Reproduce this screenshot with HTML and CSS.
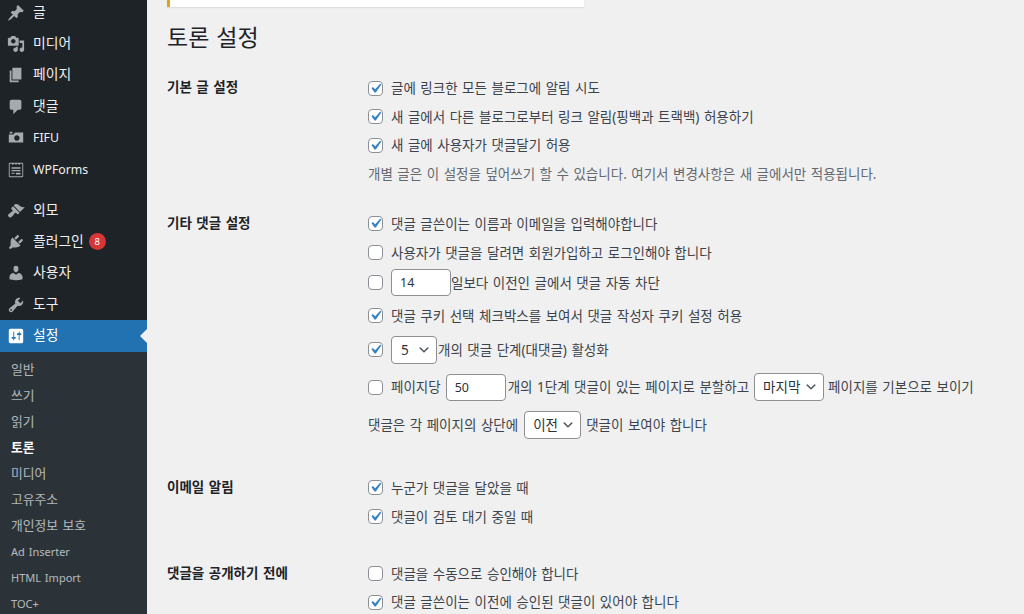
FILE: index.html
```html
<!DOCTYPE html>
<html lang="ko">
<head>
<meta charset="utf-8">
<title>토론 설정</title>
<link rel="stylesheet" href="styles.css">
</head>
<body>
<aside class="sidebar">
  <nav class="menu">
    <a class="item"><svg class="ico" viewBox="0 0 20 20"><path d="M10.44 3.02l1.82-1.82 6.36 6.35-1.83 1.82c-1.05-.68-2.48-.57-3.41.36l-.75.75c-.92.93-1.04 2.35-.35 3.41l-1.83 1.82-2.41-2.41-2.8 2.79c-.42.42-3.38 2.71-3.8 2.29s1.86-3.39 2.28-3.81l2.79-2.79L4.1 9.36l1.83-1.82c1.05.69 2.48.57 3.41-.36l.75-.75c.93-.92 1.04-2.35.35-3.41z"/></svg><span>글</span></a>
    <a class="item"><svg class="ico" viewBox="0 0 20 20"><path d="M13 11V4c0-.55-.45-1-1-1h-1.67L9 1H5L3.67 3H2c-.55 0-1 .45-1 1v7c0 .55.45 1 1 1h10c.55 0 1-.45 1-1zM7 4.5c1.38 0 2.5 1.12 2.5 2.5S8.38 9.5 7 9.5 4.5 8.38 4.5 7 5.62 4.5 7 4.5zM14 6h5v10.5c0 1.38-1.12 2.5-2.5 2.5S14 17.88 14 16.5s1.12-2.5 2.5-2.5c.17 0 .34.02.5.05V9h-3V6zm-4 8.05V13h2v3.5c0 1.38-1.12 2.5-2.5 2.5S7 17.88 7 16.5 8.12 14 9.5 14c.17 0 .34.02.5.05z"/></svg><span>미디어</span></a>
    <a class="item"><svg class="ico" viewBox="0 0 20 20"><path d="M6 15V2h10v13H6zm-1 1h8v2H3V5h2v11z"/></svg><span>페이지</span></a>
    <a class="item"><svg class="ico" viewBox="0 0 20 20"><path d="M5 2h9c1.1 0 2 .9 2 2v7c0 1.1-.9 2-2 2h-2l-5 5v-5H5c-1.1 0-2-.9-2-2V4c0-1.1.9-2 2-2z"/></svg><span>댓글</span></a>
    <a class="item"><svg class="ico" viewBox="0 0 20 20"><path d="M6 5V3H3v2h3zm12 10V4H9L7 6H2v9h16zm-7-8c1.66 0 3 1.34 3 3s-1.34 3-3 3-3-1.34-3-3 1.34-3 3-3z"/></svg><span class="latin">FIFU</span></a>
    <a class="item"><svg class="ico" viewBox="0 0 20 20"><path fill-rule="evenodd" d="M3 2h14a1 1 0 0 1 1 1v14a1 1 0 0 1-1 1H3a1 1 0 0 1-1-1V3a1 1 0 0 1 1-1zm0 1v14h14V3h-2.200l-1.300 1.500L12 3h-.9L10 4.500 8.900 3H8L6.500 4.500 5.200 3H3zm2 4h10v1.500H5V7zm0 3h10v1.500H5V10zm5 3h5v2h-5v-2zm-5 0h3.500v1.200H5V13z"/></svg><span class="latin">WPForms</span></a>
    <div class="sep"></div>
    <a class="item"><svg class="ico" viewBox="0 0 20 20"><path d="M14.480 11.060L7.410 3.990l1.500-1.500c.5-.56 2.300-.47 3.510.32 1.210.8 1.430 1.280 2.910 2.100 1.180.64 2.450 1.260 4.450.85zm-.71.710L6.700 4.700 4.930 6.470c-.39.39-.39 1.020 0 1.410l1.060 1.060c.39.39.39 1.030 0 1.420-.6.6-1.430 1.110-2.210 1.690-.35.26-.7.53-1.010.84C1.430 13.230.91 15.040 1.200 15.600l1.420 1.420c.5.28 2.300-.24 3.650-1.590.3-.3.57-.65.84-1.010.58-.78 1.090-1.610 1.690-2.210.39-.39 1.020-.39 1.410 0l1.060 1.060c.39.39 1.020.39 1.410 0z"/></svg><span>외모</span></a>
    <a class="item"><svg class="ico" viewBox="0 0 20 20"><path d="M13.110 4.360L9.870 7.600 8 5.730l3.240-3.240c.35-.34 1.050-.2 1.560.32.52.51.66 1.210.31 1.550zm-8 1.770l.91-1.120 9.010 9.010-1.190.84c-.71.71-2.630 1.160-3.820 1.160H6.140L4.900 17.260c-.59.59-1.540.59-2.120 0-.59-.58-.59-1.530 0-2.120l1.240-1.240v-3.880c0-1.130.4-3.190 1.090-3.890zm7.260 3.970l3.240-3.240c.34-.35 1.040-.21 1.550.31.52.51.66 1.210.31 1.550l-3.240 3.250z"/></svg><span>플러그인</span><b class="badge">8</b></a>
    <a class="item"><svg class="ico" viewBox="0 0 20 20"><path d="M10 9.250c-2.270 0-2.730-3.440-2.730-3.440C7 4.020 7.820 2 9.970 2c2.160 0 2.980 2.020 2.710 3.810 0 0-.41 3.440-2.680 3.440zm0 2.570L12.720 10c2.390 0 4.520 2.330 4.520 4.530v2.490s-3.650 1.130-7.240 1.130c-3.650 0-7.240-1.130-7.240-1.130v-2.490c0-2.250 1.940-4.480 4.470-4.480z"/></svg><span>사용자</span></a>
    <a class="item"><svg class="ico" viewBox="0 0 20 20"><path d="M16.680 9.770c-1.340 1.340-3.300 1.670-4.950.99l-5.410 6.520c-.99.99-2.590.99-3.580 0s-.99-2.590 0-3.570l6.520-5.420c-.68-1.650-.35-3.610.99-4.950 1.280-1.280 3.120-1.620 4.720-1.060l-2.890 2.890 2.820 2.820 2.860-2.870c.53 1.580.18 3.390-1.080 4.650zM3.810 16.210c.4.39 1.040.39 1.430 0 .4-.4.4-1.040 0-1.430-.39-.4-1.030-.4-1.430 0-.39.39-.39 1.030 0 1.430z"/></svg><span>도구</span></a>
    <a class="item current"><svg class="ico" viewBox="0 0 20 20"><path d="M18 16V4c0-1.100-.9-2-2-2H4c-1.100 0-2 .9-2 2v12c0 1.100.9 2 2 2h12c1.100 0 2-.9 2-2zM8 11h1c.55 0 1 .45 1 1s-.45 1-1 1H8v1.500c0 .28-.22.5-.5.5s-.5-.22-.5-.5V13H6c-.55 0-1-.45-1-1s.45-1 1-1h1V5.500c0-.28.22-.5.5-.5s.5.22.5.5V11zm5-2h-1c-.55 0-1-.45-1-1s.45-1 1-1h1V5.500c0-.28.22-.5.5-.5s.5.22.5.5V7h1c.55 0 1 .45 1 1s-.45 1-1 1h-1v5.500c0 .28-.22.5-.5.5s-.5-.22-.5-.5V9z"/></svg><span>설정</span></a>
    <ul class="submenu">
      <li>일반</li>
      <li>쓰기</li>
      <li>읽기</li>
      <li class="on">토론</li>
      <li>미디어</li>
      <li>고유주소</li>
      <li>개인정보 보호</li>
      <li class="latin">Ad Inserter</li>
      <li class="latin">HTML Import</li>
      <li class="latin">TOC+</li>
    </ul>
  </nav>
</aside>
<main class="content">
  <div class="notice"></div>
  <h1 class="title">토론 설정</h1>
  <section class="group group-first">
    <h2 class="label">기본 글 설정</h2>
    <div class="fields">
      <label class="line"><input type="checkbox" checked>글에 링크한 모든 블로그에 알림 시도</label>
      <label class="line"><input type="checkbox" checked>새 글에서 다른 블로그로부터 링크 알림(핑백과 트랙백) 허용하기</label>
      <label class="line"><input type="checkbox" checked>새 글에 사용자가 댓글달기 허용</label>
      <p class="line desc">개별 글은 이 설정을 덮어쓰기 할 수 있습니다. 여기서 변경사항은 새 글에서만 적용됩니다.</p>
    </div>
  </section>
  <section class="group">
    <h2 class="label">기타 댓글 설정</h2>
    <div class="fields">
      <label class="line"><input type="checkbox" checked>댓글 글쓴이는 이름과 이메일을 입력해야합니다</label>
      <label class="line"><input type="checkbox">사용자가 댓글을 달려면 회원가입하고 로그인해야 합니다</label>
      <label class="line ctl tight"><input type="checkbox"><input class="num w60" type="text" value="14">일보다 이전인 글에서 댓글 자동 차단</label>
      <label class="line after-ctl"><input type="checkbox" checked>댓글 쿠키 선택 체크박스를 보여서 댓글 작성자 쿠키 설정 허용</label>
      <label class="line ctl"><input type="checkbox" checked><select class="sel w46"><option>5</option></select>개의 댓글 단계(대댓글) 활성화</label>
      <label class="line ctl"><input type="checkbox">페이지당<input class="num w60 ml2" type="text" value="50"><span class="ml1">개의 1단계 댓글이 있는 페이지로 분할하고</span><select class="sel w70 ml2"><option>마지막</option></select><span class="ml">페이지를 기본으로 보이기</span></label>
      <label class="line ctl">댓글은 각 페이지의 상단에<select class="sel w57 ml3"><option>이전</option></select><span class="ml2">댓글이 보여야 합니다</span></label>
    </div>
  </section>
  <section class="group">
    <h2 class="label">이메일 알림</h2>
    <div class="fields">
      <label class="line"><input type="checkbox" checked>누군가 댓글을 달았을 때</label>
      <label class="line"><input type="checkbox" checked>댓글이 검토 대기 중일 때</label>
    </div>
  </section>
  <section class="group">
    <h2 class="label">댓글을 공개하기 전에</h2>
    <div class="fields">
      <label class="line"><input type="checkbox">댓글을 수동으로 승인해야 합니다</label>
      <label class="line"><input type="checkbox" checked>댓글 글쓴이는 이전에 승인된 댓글이 있어야 합니다</label>
    </div>
  </section>
</main>
</body>
</html>
```
FILE: styles.css
```css
* { box-sizing: border-box; }
html, body { margin: 0; height: 614px; overflow: hidden; }
body {
  display: flex;
  background: #f0f0f1;
  color: #3c434a;
  font: 13.500px/20px "Noto Sans", "Noto Sans CJK KR", sans-serif;
  word-spacing: 1px;
}
.sidebar { width: 146.500px; flex: none; background: #1d2327; overflow: hidden; }
.menu { margin-top: -3px; }
.item {
  display: flex;
  align-items: center;
  height: 31.400px;
  padding-left: 7px;
  color: #f0f0f1;
  font-size: 13.800px;
  position: relative;
}
.item span { margin-bottom: 2px; }
.item .latin { font-size: 12.300px; margin-bottom: 0; }
.ico { width: 18px; height: 18px; fill: #a7aaad; flex: none; margin-right: 8px; }
.sep { height: 9.500px; }
.badge {
  margin-left: 5px;
  width: 17px;
  height: 17px;
  border-radius: 50%;
  background: #d63638;
  color: #fff;
  font-size: 9.500px;
  font-weight: 400;
  line-height: 17px;
  text-align: center;
}
.current { background: #2271b1; color: #fff; }
.current .ico { fill: #fff; }
.current::after {
  content: "";
  position: absolute;
  right: 0;
  top: 50%;
  margin-top: -7.500px;
  border: 7.500px solid transparent;
  border-right-color: #f0f0f1;
  border-left-width: 0;
}
.submenu {
  list-style: none;
  margin: 0;
  padding: 5px 0 0;
  background: #2c3338;
  color: rgba(240, 246, 252, .7);
}
.submenu li { height: 26px; line-height: 24px; padding-left: 11px; font-size: 12.800px; }
.submenu .latin { font-size: 11px; line-height: 26px; }
.submenu .on { color: #fff; font-weight: 700; }

.content { flex: 1; padding-left: 20.500px; min-width: 0; }
.notice {
  width: 417px;
  height: 7px;
  background: #fff;
  border-left: 3px solid #dba617;
  box-shadow: 0 1px 1px rgba(0, 0, 0, .08);
}
.title { margin: 15px 0 26px; font-size: 23px; font-weight: 400; line-height: 30px; color: #1d2327; }
.group { display: flex; margin-bottom: 39px; }
.group-first { margin-bottom: 30px; }
.group + .group + .group { margin-bottom: 37px; }
.label { width: 201px; flex: none; margin: -1px 0 0; font-size: 13.500px; font-weight: 700; line-height: 20px; color: #1d2327; }
.fields { display: flex; flex-direction: column; gap: 8.670px; }
.line { display: flex; align-items: center; min-height: 20px; margin: 0; white-space: nowrap; }
.ctl { margin-top: 1px; }
.tight { margin-top: -2px; }
.after-ctl { margin-top: 1px; }
.desc { color: #646970; }
input[type="checkbox"] {
  appearance: none;
  width: 15px;
  height: 15px;
  margin: 0 8px 0 0;
  flex: none;
  background: #fff center / 19px no-repeat;
  border: 1px solid #8c8f94;
  border-radius: 4px;
}
input[type="checkbox"]:checked {
  background-image: url("data:image/svg+xml,%3Csvg xmlns='http://www.w3.org/2000/svg' viewBox='0 0 20 20'%3E%3Cpath d='M14.830 4.890l1.340.94-5.810 8.380H9.020L5.780 9.670l1.340-1.250 2.570 2.400z' fill='%233582c4'/%3E%3C/svg%3E");
}
.num, .sel {
  height: 27px;
  padding: 0 8px;
  font: 12.500px/20px "Noto Sans", "Noto Sans CJK KR", sans-serif;
  color: #2c3338;
  background: #fff;
  border: 1px solid #8c8f94;
  border-radius: 4px;
  flex: none;
}
.sel {
  appearance: none;
  height: 28px;
  font-size: 13.500px;
  padding: 0 16px 0 8px;
  background: #fff url("data:image/svg+xml,%3Csvg xmlns='http://www.w3.org/2000/svg' viewBox='0 0 20 20'%3E%3Cpath d='M5 6l5 5 5-5 2 1-7 7-7-7z' fill='%2350575e'/%3E%3C/svg%3E") right 5px center / 14px no-repeat;
}
.w46 { width: 46px; margin-right: 1px; padding-left: 9px; }
.w57 { width: 57px; }
.w60 { width: 60px; }
.w70 { width: 70px; }
.ml { margin-left: 4px; }
.ml1 { margin-left: 2px; }
.ml2 { margin-left: 5px; }
.ml3 { margin-left: 6px; }
```
